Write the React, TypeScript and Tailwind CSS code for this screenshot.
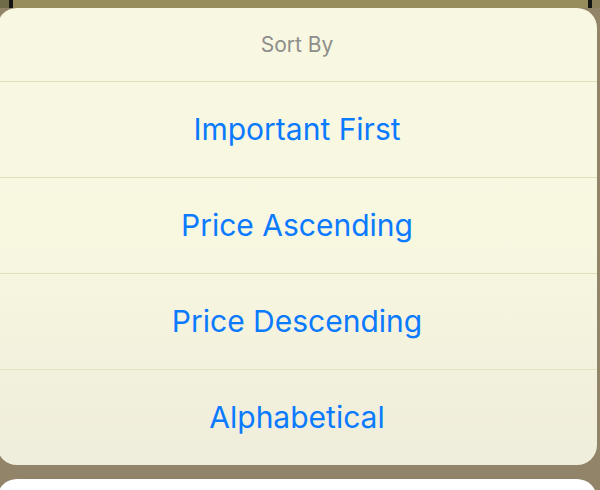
import React from 'react'

const options = ['Important First', 'Price Ascending', 'Price Descending', 'Alphabetical']

export default function App() {
  return (
    <div
      className="w-[600px] h-[490px] overflow-hidden bg-[#928469] flex flex-col"
      style={{ fontFamily: 'Inter, "Noto Sans", sans-serif' }}
    >
      {/* backdrop strip behind the sheet */}
      <div className="h-[8px] shrink-0 flex">
        <div className="w-[9px] bg-[#6f6a48]" />
        <div className="w-[4px] bg-[#141414]" />
        <div className="flex-1 bg-[#978d5c]" />
        <div className="w-[4px] bg-[#141414]" />
        <div className="w-[8px] bg-[#8a7f58]" />
      </div>

      {/* action sheet */}
      <div className="shrink-0 -ml-[3px] w-[600px] rounded-[20px] overflow-hidden bg-gradient-to-b from-[#f8f7e1] via-[#f8f7e0] to-[#efeddb]">
        <div className="h-[73px] flex items-center justify-center text-[21px] text-[#8e8e8a]">
          Sort By
        </div>
        {options.map((label) => (
          <div
            key={label}
            className="h-[96px] border-t border-[#e2e1b9] flex items-center justify-center text-[30px] text-[#0a7aff]"
          >
            {label}
          </div>
        ))}
      </div>

      <div className="h-[14px] shrink-0" />

      {/* cancel card */}
      <div className="-ml-[3px] w-[600px] h-[40px] shrink-0 rounded-[20px] bg-white" />
    </div>
  )
}
